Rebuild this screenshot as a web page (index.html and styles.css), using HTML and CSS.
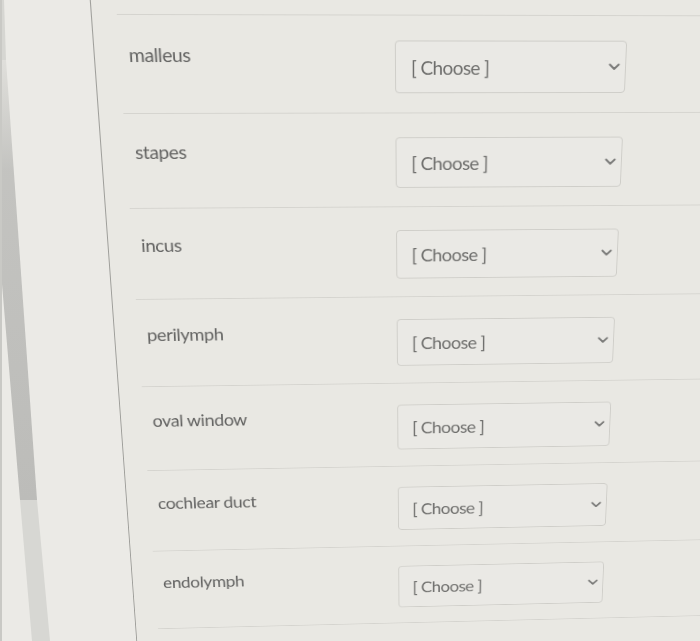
FILE: index.html
```html
<!DOCTYPE html>
<html lang="en">
<head>
<meta charset="utf-8">
<title>Matching</title>
<link rel="stylesheet" href="styles.css">
</head>
<body>
<div class="stage">
  <svg class="decor" width="700" height="641" viewBox="0 0 700 641" aria-hidden="true">
    <defs>
      <linearGradient id="barfade" x1="0" y1="0" x2="0" y2="1">
        <stop offset="0" stop-color="#c4c4c0" stop-opacity="0.3"/>
        <stop offset="0.25" stop-color="#bfbfbc" stop-opacity="0.9"/>
        <stop offset="1" stop-color="#bcbcb9"/>
      </linearGradient>
    </defs>
    <rect x="0" y="0" width="160" height="641" fill="#ebeae6"/>
    <polygon points="0,60 6,60 37,500 20,500 0,260" fill="url(#barfade)"/>
    <polygon points="0,0 4,0 6,60 0,60" fill="#d6d6d2"/>
    <polygon points="20,500 37,500 50,641 32,641" fill="#d7d7d3"/>
    <rect x="0" y="0" width="2" height="641" fill="#c9c9c5"/>
  </svg>
  <main class="sheet">
    <div class="margin"></div>
    <section class="content">
      <div class="row">
        <span class="term">malleus</span>
        <div class="select"><span class="placeholder">[ Choose ]</span><svg class="chev" width="12" height="8" viewBox="0 0 12 8"><path d="M1.5 1.5 L6 6 L10.5 1.5"/></svg></div>
      </div>
      <div class="row">
        <span class="term">stapes</span>
        <div class="select"><span class="placeholder">[ Choose ]</span><svg class="chev" width="12" height="8" viewBox="0 0 12 8"><path d="M1.5 1.5 L6 6 L10.5 1.5"/></svg></div>
      </div>
      <div class="row">
        <span class="term">incus</span>
        <div class="select"><span class="placeholder">[ Choose ]</span><svg class="chev" width="12" height="8" viewBox="0 0 12 8"><path d="M1.5 1.5 L6 6 L10.5 1.5"/></svg></div>
      </div>
      <div class="row">
        <span class="term">perilymph</span>
        <div class="select"><span class="placeholder">[ Choose ]</span><svg class="chev" width="12" height="8" viewBox="0 0 12 8"><path d="M1.5 1.5 L6 6 L10.5 1.5"/></svg></div>
      </div>
      <div class="row">
        <span class="term">oval window</span>
        <div class="select"><span class="placeholder">[ Choose ]</span><svg class="chev" width="12" height="8" viewBox="0 0 12 8"><path d="M1.5 1.5 L6 6 L10.5 1.5"/></svg></div>
      </div>
      <div class="row">
        <span class="term">cochlear duct</span>
        <div class="select"><span class="placeholder">[ Choose ]</span><svg class="chev" width="12" height="8" viewBox="0 0 12 8"><path d="M1.5 1.5 L6 6 L10.5 1.5"/></svg></div>
      </div>
      <div class="row">
        <span class="term">endolymph</span>
        <div class="select"><span class="placeholder">[ Choose ]</span><svg class="chev" width="12" height="8" viewBox="0 0 12 8"><path d="M1.5 1.5 L6 6 L10.5 1.5"/></svg></div>
      </div>
      <div class="row"></div>
    </section>
  </main>
</div>
</body>
</html>
```

FILE: styles.css
```css
html, body {
  margin: 0;
  padding: 0;
  width: 700px;
  height: 641px;
  overflow: hidden;
  background: #e9e8e3;
}

body {
  font-family: Lato, "Open Sans", "Liberation Sans", sans-serif;
}

.stage {
  display: grid;
  width: 700px;
  height: 641px;
  overflow: hidden;
}

.stage > * {
  grid-area: 1 / 1;
}

.decor {
  display: block;
}

.sheet {
  display: flex;
  width: 1000px;
  height: 900px;
  transform-origin: 425px 67px;
  transform: skewX(0.55deg) perspective(1000px) rotateY(2.5deg) rotateX(-12.4deg);
}

.margin {
  width: 99px;
  flex: none;
}

.content {
  flex: 1;
  border-left: 1px solid #9e9e9a;
  padding: 14px 0 0 24px;
  background: #e9e8e3;
}

.row {
  display: flex;
  align-items: flex-start;
  box-sizing: border-box;
  height: 100px;
  border-top: 1px solid #d5d4cf;
  padding-top: 25px;
}

.term {
  flex: none;
  width: 262px;
  padding-left: 9px;
  margin-top: 3.5px;
  font-size: 19px;
  line-height: 1.2;
  letter-spacing: -0.4px;
  color: #626261;
}

.select {
  flex: none;
  box-sizing: border-box;
  width: 233px;
  height: 54px;
  display: flex;
  align-items: center;
  justify-content: space-between;
  padding: 0 5px 0 15px;
  border: 1px solid #cfcec9;
  border-radius: 4px;
  background: #eae9e5;
}

.placeholder {
  font-size: 19px;
  letter-spacing: -0.6px;
  color: #6e6e6c;
}

.chev {
  display: block;
}

.chev path {
  fill: none;
  stroke: #7a7a78;
  stroke-width: 2;
  stroke-linecap: round;
  stroke-linejoin: round;
}
```
